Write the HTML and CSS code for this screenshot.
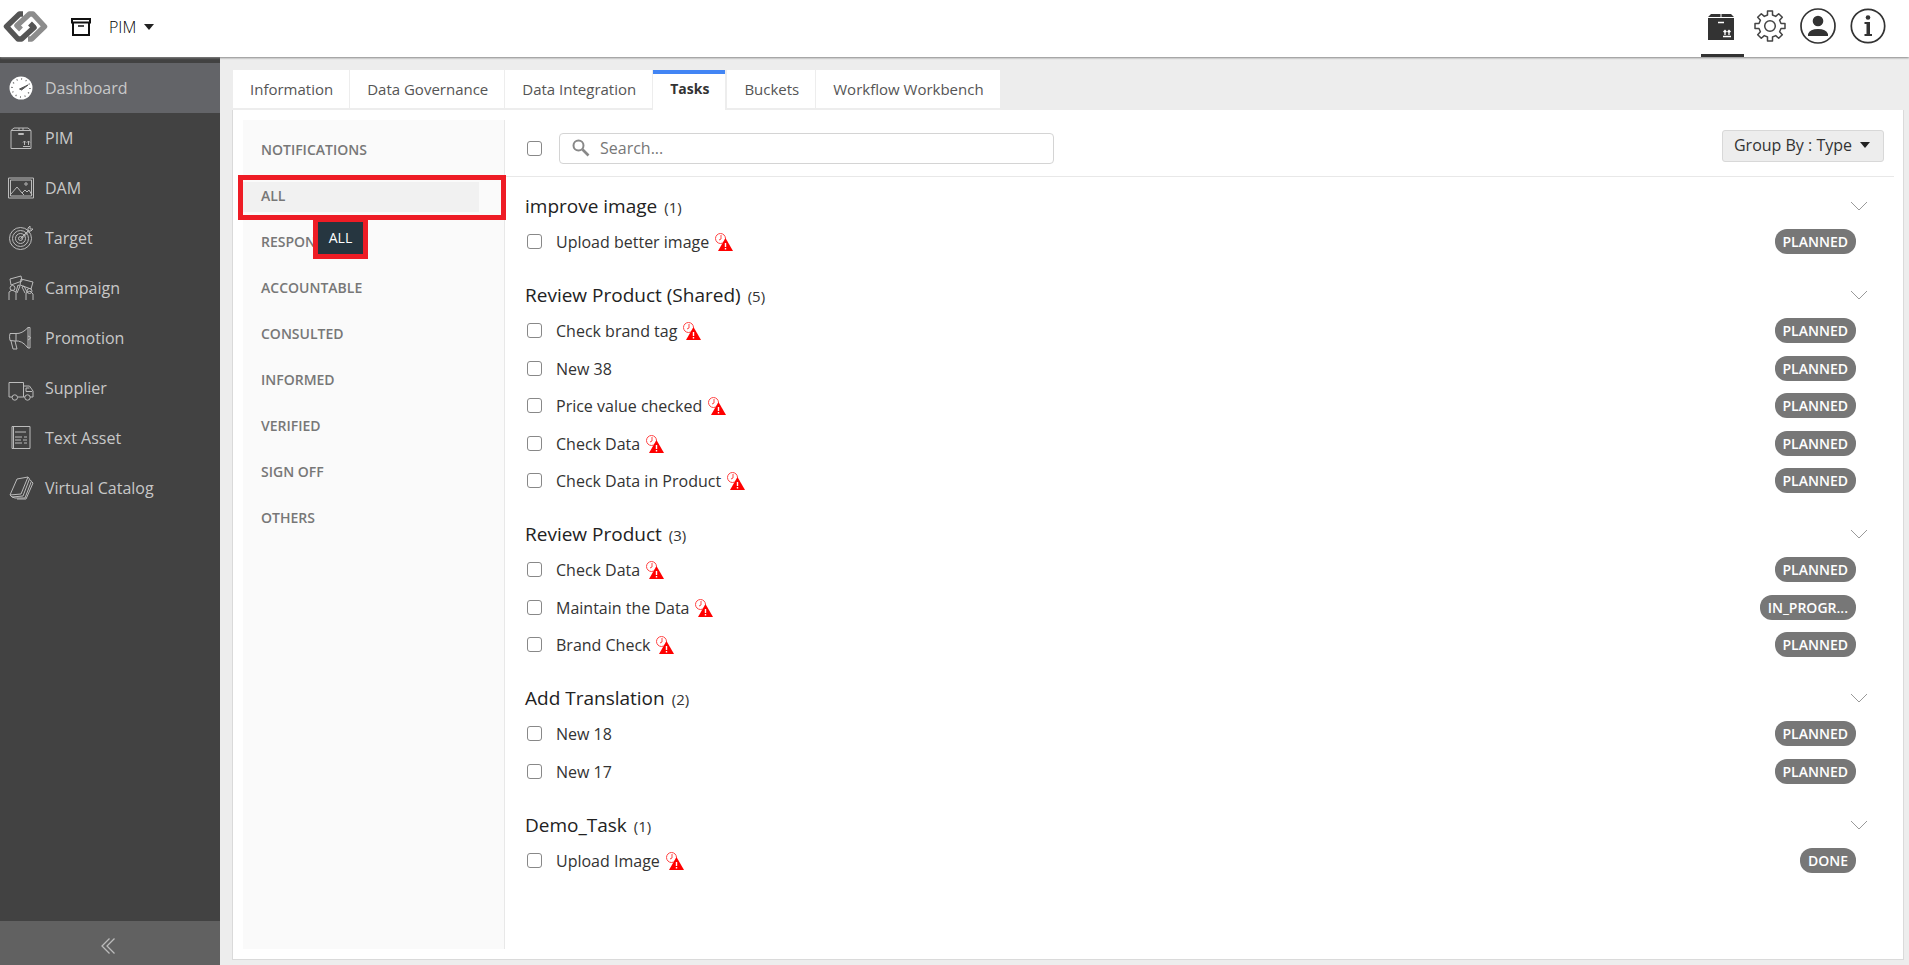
FILE: index.html
```html
<!DOCTYPE html>
<html lang="en">
<head>
<meta charset="utf-8">
<title>PIM - Tasks</title>
<link rel="stylesheet" href="styles.css">
</head>
<body>
<svg class="defs" aria-hidden="true">
  <symbol id="chevron" viewBox="0 0 18 10"><path d="M1 1l8 8 8-8" fill="none" stroke="#999"/></symbol>
  <symbol id="overdue" viewBox="0 0 18 18">
    <circle cx="5.500" cy="5.500" r="5" fill="#fff" stroke="#f44" stroke-width="1"/>
    <path d="M6 2v4L4 7" fill="none" stroke="#f44"/>
    <path d="M10.500 5L18 18H3z" fill="#f00"/>
    <path d="M10.500 10v4M10.500 15v1.500" stroke="#fff" stroke-width="1.400"/>
  </symbol>
</svg>
<header class="topbar">
  <a class="logo" href="#" aria-label="Home">
    <svg width="46" height="32" viewBox="0 0 46 32" fill="none" stroke-width="5.500" stroke-linejoin="round">
      <path d="M21 3H17.500L4.500 15.500 16 28H19.500L32 16.500 28 12.500" stroke="#555"/>
      <path d="M26 28h3.500L42.500 15.500 31 3H27.500L15 14.500 19 18.500" stroke="#8c8c8c"/>
    </svg>
  </a>
  <button class="switcher">
    <svg width="20" height="18" viewBox="0 0 20 18" fill="none" stroke="#111" stroke-width="2"><path d="M1 1h18v3.500H1zM2 4.500V17h16V4.500"/><path d="M7 8h6" stroke-width="1.500"/></svg>
    <span>PIM</span>
    <svg width="10" height="6" viewBox="0 0 10 6"><path d="M0 0h10L5 6z" fill="#222"/></svg>
  </button>
  <nav class="tools" aria-label="Tools">
    <a class="tool current" href="#" aria-label="Products">
      <svg width="28" height="28" viewBox="0 0 28 28"><path d="M4 1h9.500v3H1zM14.500 1H24l3 3H14.500zM1 5h26v22H1z" fill="#333"/><path d="M11 9.500h6M16 23.500h8M18 22v-4M22 22v-4M16.500 19l1.500-1.500 1.500 1.500M20.500 19l1.500-1.500 1.500 1.500" stroke="#fff" stroke-width="1.300" fill="none"/></svg>
    </a>
    <a class="tool" href="#" aria-label="Settings">
      <svg width="32" height="32" viewBox="0 0 32 32" fill="none" stroke="#444" stroke-width="1.500" stroke-linejoin="round"><circle cx="16" cy="16" r="5.300"/><path d="M13.500 1h5v4l3.200 1.400 3-2.700 3.600 3.600-2.700 3L27 13.500h4v5h-4l-1.400 3.200 2.700 3-3.600 3.600-3-2.700L18.500 27v4h-5v-4l-3.200-1.400-3 2.700-3.600-3.600 2.700-3L5 18.500H1v-5h4l1.400-3.200-2.700-3 3.600-3.600 3 2.700L13.500 5z"/></svg>
    </a>
    <a class="tool" href="#" aria-label="Account">
      <svg width="36" height="36" viewBox="0 0 36 36"><circle cx="18" cy="18" r="17" fill="none" stroke="#333" stroke-width="1.700"/><circle cx="18" cy="13" r="5.300" fill="#333"/><path d="M8 28v-2q2-5 10-5t10 5v2z" fill="#333"/></svg>
    </a>
    <a class="tool" href="#" aria-label="Information">
      <svg width="36" height="36" viewBox="0 0 36 36"><circle cx="18" cy="18" r="16.700" fill="none" stroke="#333" stroke-width="1.700"/><circle cx="18" cy="9.500" r="2.300" fill="#333"/><path d="M14.500 14H20v12h2v2h-7.500v-2h2V16h-2z" fill="#333"/></svg>
    </a>
  </nav>
</header>
<div class="shell">
  <aside class="sidebar">
    <nav class="menu" aria-label="Main">
      <a class="entry active" href="#"><svg viewBox="0 0 26 26"><circle cx="13" cy="13" r="11.500" fill="#fff"/><path d="M11.500 14L20 10l-6.500 5z" fill="#555" stroke="#555"/><circle cx="13" cy="13" r="9" fill="none" stroke="#666" stroke-width="1.500" stroke-dasharray="1 3.700"/></svg>Dashboard</a>
      <a class="entry" href="#"><svg viewBox="0 0 26 26"><path d="M3 5.500L6 3h14l3 2.500V23.500H3zM3 5.500h20M11 3v2.500M15 3v2.500M10.500 8.500h5v1h-5zM15 21.500h7M16.500 20v-4M20.500 20v-4M15 17.500l1.500-1.500 1.500 1.500M19 17.500l1.500-1.500 1.500 1.500"/></svg>PIM</a>
      <a class="entry" href="#"><svg viewBox="0 0 26 26"><path d="M.500 3h25v20H.500zM2.500 5h21v16h-21zM3 19l6-7 5 6 3-3 2 2 2-2 3 5M14 18l2 2"/><circle cx="18" cy="9" r="1.200"/></svg>DAM</a>
      <a class="entry" href="#"><svg viewBox="0 0 26 26"><circle cx="12.500" cy="13.500" r="11"/><circle cx="12.500" cy="13.500" r="8"/><circle cx="12.500" cy="13.500" r="5"/><circle cx="12.500" cy="13.500" r="2"/><path d="M12.500 13.500L21 5M20 6V3l2-2v3h3l-2 2zM13.500 14L22 5.500"/></svg>Target</a>
      <a class="entry" href="#"><svg viewBox="0 0 26 26"><path d="M2 4l11-3 1 5-11 4zM13 4l12 3-2 7-11-4zM1 25v-8l3-2 4 2v8M18 25v-7l4-2 3 3v6M8 17l2-7 2 1-3 7M17 18l-3-6 2-1 3 6"/><circle cx="4.500" cy="13" r="2.500"/><circle cx="21.500" cy="16" r="2.500"/></svg>Campaign</a>
      <a class="entry" href="#"><svg viewBox="0 0 26 26"><path d="M2 8.500q-1 3 0 7L7 16q7-1 13 7V2.500Q14 9 8 8.500zM8 8.500V16M20 11q5 1.500 0 4M3 16l2 8h4l-1-4-1-4M20 2.500h2v20.500h-2"/></svg>Promotion</a>
      <a class="entry" href="#"><svg viewBox="0 0 26 26"><path d="M4 22H1V7.500h14.500V22H9.500M15.500 11h6l3.500 5v6h-3M17 22h-1.500M18 13v3.500h6M18 13h3.500"/><circle cx="6.800" cy="22.500" r="2.700"/><circle cx="19.500" cy="22.500" r="2.700"/></svg>Supplier</a>
      <a class="entry" href="#"><svg viewBox="0 0 26 26"><path d="M4 1.500h18v22H4zM5.500 1.500v22M7 7h11M7 12h7M16 12h3M7 15h6M15 15h4M7 18h7M16 18h3"/></svg>Text Asset</a>
      <a class="entry" href="#"><svg viewBox="0 0 26 26"><path d="M9 4l11-2-7 17-11 1zM20 2l1.500 2L15 21l-11 1-2-2M22 5l1.500 1L17 23H7l-3-1M24 7l1 1-7 16H9"/></svg>Virtual Catalog</a>
    </nav>
    <button class="collapse" aria-label="Collapse menu"><svg width="14" height="16" viewBox="0 0 14 16" fill="none" stroke="#bbb" stroke-width="1.300"><path d="M8.500.500L1 8l7.500 7.500M13.500.500L6 8l7.500 7.500"/></svg></button>
  </aside>
  <main class="main">
    <nav class="tabs" aria-label="Sections">
      <a class="tab" href="#">Information</a>
      <a class="tab" href="#">Data Governance</a>
      <a class="tab" href="#">Data Integration</a>
      <a class="tab selected" href="#">Tasks</a>
      <a class="tab" href="#">Buckets</a>
      <a class="tab" href="#">Workflow Workbench</a>
    </nav>
    <div class="panel">
      <nav class="roles" aria-label="Task roles">
        <a class="role" href="#">NOTIFICATIONS</a>
        <div class="role-current">
          <a class="role" href="#">ALL</a>
          <span class="frame"></span>
          <span class="tip" role="tooltip">ALL</span>
        </div>
        <a class="role" href="#">RESPONSIBLE</a>
        <a class="role" href="#">ACCOUNTABLE</a>
        <a class="role" href="#">CONSULTED</a>
        <a class="role" href="#">INFORMED</a>
        <a class="role" href="#">VERIFIED</a>
        <a class="role" href="#">SIGN OFF</a>
        <a class="role" href="#">OTHERS</a>
      </nav>
      <section class="tasks">
        <div class="toolbar">
          <input class="check" type="checkbox" aria-label="Select all">
          <label class="search">
            <svg width="18" height="18" viewBox="0 0 18 18" fill="none" stroke="#888"><circle cx="6.500" cy="6.500" r="5" stroke-width="2"/><path d="M10.500 10.500l6 6" stroke-width="2.600"/></svg>
            <input type="text" placeholder="Search..." aria-label="Search">
          </label>
          <button class="grouping">Group By : Type <svg width="10" height="6" viewBox="0 0 10 6"><path d="M0 0h10L5 6z" fill="#222"/></svg></button>
        </div>
        <div class="groups">
          <section class="group">
            <h2 class="title">improve image <small>(1)</small><button class="fold" aria-label="Collapse"><svg><use href="#chevron"/></svg></button></h2>
            <ul class="rows">
              <li class="row"><label><input class="check" type="checkbox">Upload better image</label><svg class="late"><use href="#overdue"/></svg><span class="badge">PLANNED</span></li>
            </ul>
          </section>
          <section class="group">
            <h2 class="title">Review Product (Shared) <small>(5)</small><button class="fold" aria-label="Collapse"><svg><use href="#chevron"/></svg></button></h2>
            <ul class="rows">
              <li class="row"><label><input class="check" type="checkbox">Check brand tag</label><svg class="late"><use href="#overdue"/></svg><span class="badge">PLANNED</span></li>
              <li class="row"><label><input class="check" type="checkbox">New 38</label><span class="badge">PLANNED</span></li>
              <li class="row"><label><input class="check" type="checkbox">Price value checked</label><svg class="late"><use href="#overdue"/></svg><span class="badge">PLANNED</span></li>
              <li class="row"><label><input class="check" type="checkbox">Check Data</label><svg class="late"><use href="#overdue"/></svg><span class="badge">PLANNED</span></li>
              <li class="row"><label><input class="check" type="checkbox">Check Data in Product</label><svg class="late"><use href="#overdue"/></svg><span class="badge">PLANNED</span></li>
            </ul>
          </section>
          <section class="group">
            <h2 class="title">Review Product <small>(3)</small><button class="fold" aria-label="Collapse"><svg><use href="#chevron"/></svg></button></h2>
            <ul class="rows">
              <li class="row"><label><input class="check" type="checkbox">Check Data</label><svg class="late"><use href="#overdue"/></svg><span class="badge">PLANNED</span></li>
              <li class="row"><label><input class="check" type="checkbox">Maintain the Data</label><svg class="late"><use href="#overdue"/></svg><span class="badge">IN_PROGR...</span></li>
              <li class="row"><label><input class="check" type="checkbox">Brand Check</label><svg class="late"><use href="#overdue"/></svg><span class="badge">PLANNED</span></li>
            </ul>
          </section>
          <section class="group">
            <h2 class="title">Add Translation <small>(2)</small><button class="fold" aria-label="Collapse"><svg><use href="#chevron"/></svg></button></h2>
            <ul class="rows">
              <li class="row"><label><input class="check" type="checkbox">New 18</label><span class="badge">PLANNED</span></li>
              <li class="row"><label><input class="check" type="checkbox">New 17</label><span class="badge">PLANNED</span></li>
            </ul>
          </section>
          <section class="group">
            <h2 class="title">Demo_Task <small>(1)</small><button class="fold" aria-label="Collapse"><svg><use href="#chevron"/></svg></button></h2>
            <ul class="rows">
              <li class="row"><label><input class="check" type="checkbox">Upload Image</label><svg class="late"><use href="#overdue"/></svg><span class="badge">DONE</span></li>
            </ul>
          </section>
        </div>
      </section>
    </div>
  </main>
</div>
</body>
</html>
```
FILE: styles.css
```css
* { box-sizing: border-box; }

body {
  margin: 0;
  min-height: 100vh;
  display: flex;
  flex-direction: column;
  font-family: "Open Sans", "Noto Sans", sans-serif;
  font-size: 16px;
  font-weight: 400;
  color: #333;
  background: #ededed;
}

a { color: inherit; text-decoration: none; }
button, input { font: inherit; color: inherit; }
button { border: 0; padding: 0; background: none; cursor: pointer; }
svg { flex: none; display: block; }
.defs { position: absolute; width: 0; height: 0; }

/* Top bar */
.topbar {
  position: relative;
  z-index: 1;
  display: flex;
  height: 57px;
  padding: 0 23px 0 2px;
  background: #fff;
  box-shadow: 0 1px 2px #888;
}
.logo { padding-top: 11px; }
.switcher { display: flex; align-items: center; gap: 8px; padding: 0 0 3px 23px; }
.switcher span { padding-left: 10px; font-weight: 300; color: #000; }
.tools { display: flex; gap: 14px; margin-left: auto; }
.tool { display: flex; justify-content: center; align-items: center; padding-bottom: 5px; }
.current { width: 43px; padding: 0 4px 0 0; border-bottom: 3px solid #333; margin-right: -4px; }

/* Side menu */
.shell { flex: 1; display: flex; }
.sidebar {
  flex: none;
  width: 220px;
  display: flex;
  flex-direction: column;
  justify-content: space-between;
  padding-top: 6px;
  background: #424242;
}
.entry {
  display: flex;
  align-items: center;
  gap: 11px;
  height: 50px;
  padding-left: 8px;
  color: #c8c8c8;
}
.entry svg { width: 26px; height: 26px; fill: none; stroke: #bbb; }
.entry.active { background: #636468; }
.active svg { stroke: none; }
.collapse { display: flex; justify-content: center; align-items: center; height: 44px; padding: 6px 4px 0 0; background: #616161; }

/* Tabs */
.main { flex: 1; min-width: 0; display: flex; flex-direction: column; padding: 13px 5px 5px 12px; }
.tabs { display: flex; gap: 1px; padding-left: 1px; }
.tab {
  height: 38px;
  padding: 0 16px 0 17px;
  line-height: 39px;
  font-size: 15px;
  color: #555;
  background: #fff;
}
.tab.selected {
  height: 40px;
  line-height: 30px;
  border-top: 4px solid #4285f4;
  margin-right: 1px;
  font-size: 14px;
  font-weight: 700;
  color: #333;
}

/* Panel */
.panel { flex: 1; display: flex; padding: 10px 9px 10px 10px; border: 1px solid #dadada; border-top: 0; background: #fff; }
.roles { flex: none; width: 262px; padding-top: 7px; background: #fafafa; border-right: 1px solid #e8e8e8; }
.role { display: block; height: 46px; padding-left: 18px; line-height: 46px; font-size: 14px; font-weight: 600; color: #777; }
.role-current { position: relative; padding: 9px 25px 7px 0; }
.role-current .role { height: 30px; line-height: 28px; background: #f1f1f1; }
.frame { position: absolute; inset: 2px -2px -1px -5px; border: 5px solid #ee1c25; }
.tip {
  position: absolute;
  left: 70px;
  top: 44px;
  z-index: 1;
  width: 55px;
  border: 5px solid #ee1c25;
  background: #263640;
  color: #fff;
  font-size: 14px;
  font-weight: 400;
  line-height: 32px;
  text-align: center;
}

/* Task list */
.tasks { flex: 1; min-width: 0; }
.toolbar { display: flex; align-items: center; height: 57px; padding: 0 10px 0 22px; border-bottom: 1px solid #e8e8e8; }
.check {
  appearance: none;
  flex: none;
  width: 15px;
  height: 15px;
  margin: 0;
  border: 1px solid #888;
  border-radius: 3px;
  background: #fff;
}
.check:checked { background: #4285f4; }
.search {
  flex: 0 1 495px;
  display: flex;
  align-items: center;
  gap: 10px;
  height: 31px;
  margin-left: 17px;
  padding-left: 12px;
  border: 1px solid #d4d4d4;
  border-radius: 4px;
}
.search input { flex: 1; min-width: 0; border: 0; padding: 0; outline: 0; background: none; }
.search input::placeholder { color: #777; opacity: 1; }
.grouping {
  display: flex;
  align-items: center;
  gap: 8px;
  height: 32px;
  margin: 0 0 4px auto;
  padding: 0 13px 2px 11px;
  border: 1px solid #d8d8d8;
  border-radius: 3px;
  background: #ededed;
}
.groups { padding: 16px 38px 0 20px; }
.group { padding-bottom: 28px; }
.title { display: flex; align-items: baseline; gap: 7px; height: 26px; margin: 0 0 10px; font-size: 19px; font-weight: 400; line-height: 26px; color: #222; }
.title small { font-size: 15px; color: #333; }
.fold { align-self: center; margin: 0 -12px 0 auto; }
.fold svg { width: 18px; height: 10px; }
.rows { margin: 0; padding: 0; list-style: none; }
.row { display: flex; align-items: center; height: 25px; margin-bottom: 12px; }
.row:nth-child(odd) { margin-bottom: 13px; }
.row:last-child { margin-bottom: 0; }
.row label { display: flex; align-items: center; gap: 14px; padding-left: 2px; }
.late { width: 18px; height: 18px; margin-left: 6px; }
.badge {
  margin-left: auto;
  padding: 0 8px;
  border-radius: 12px;
  background: #777;
  color: #fff;
  font-size: 14px;
  font-weight: 600;
  line-height: 25px;
}
```
